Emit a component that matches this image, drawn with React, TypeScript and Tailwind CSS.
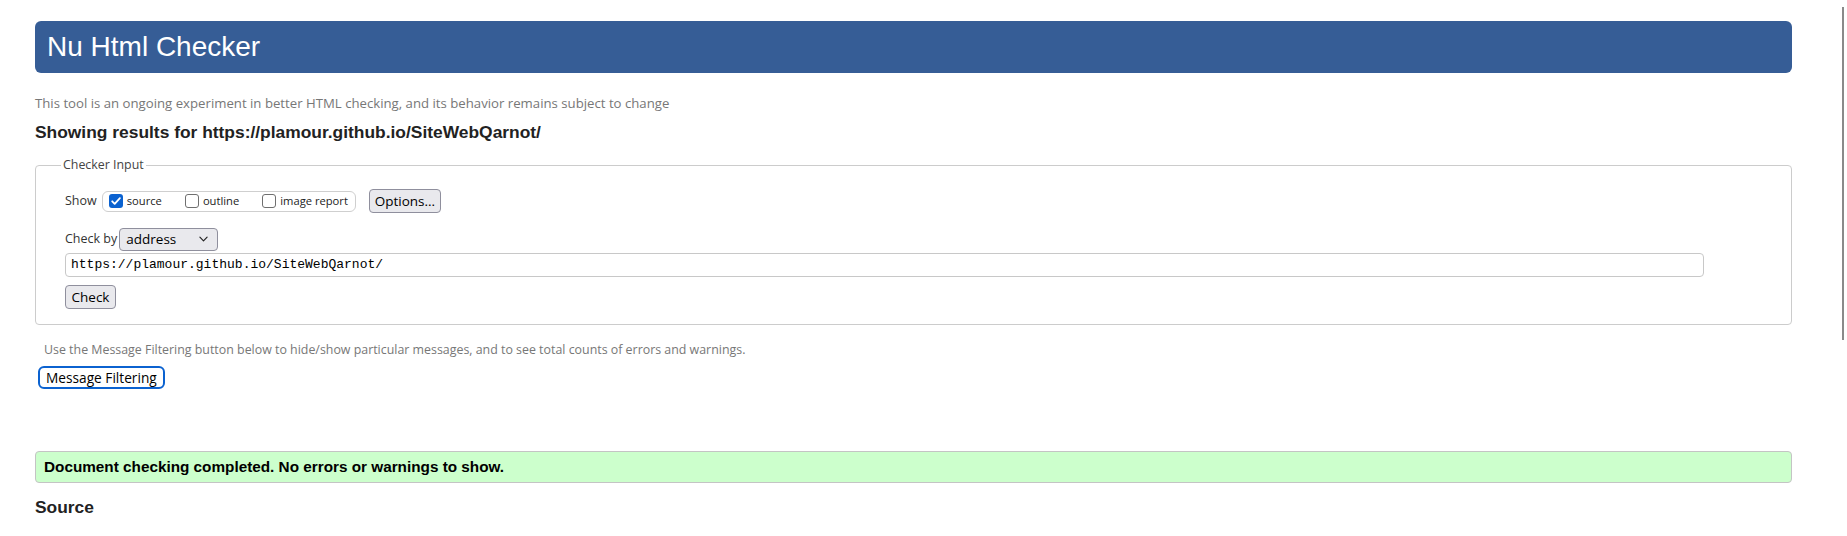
import React from "react";

function CheckBox({ checked }: { checked?: boolean }) {
  if (checked) {
    return (
      <span className="flex h-[14px] w-[14px] items-center justify-center rounded-[3px] bg-[#0b62d0]">
        <svg viewBox="0 0 14 14" className="h-[14px] w-[14px]">
          <path
            d="M3.2 7.3l2.5 2.5L10.9 4.2"
            fill="none"
            stroke="white"
            strokeWidth="1.8"
            strokeLinecap="round"
            strokeLinejoin="round"
          />
        </svg>
      </span>
    );
  }
  return <span className="h-[14px] w-[14px] rounded-[3px] border border-[#6f6f6f] bg-white" />;
}

function Option({ label, checked }: { label: string; checked?: boolean }) {
  return (
    <label className="flex items-center gap-[4px]">
      <CheckBox checked={checked} />
      <span className="text-[11.2px] leading-[16px] text-[#222]">{label}</span>
    </label>
  );
}

export default function App() {
  return (
    <div className="relative min-h-[536px] w-[1847px] overflow-hidden bg-white pl-[35px] pt-[21px] font-['Open_Sans',sans-serif]">
      <div className="w-[1757px]">
        {/* title bar */}
        <div className="flex h-[52px] items-center rounded-[6px] bg-[#365d96] pl-[12px]">
          <h1 className="font-['Liberation_Sans',Arial,sans-serif] text-[28px] leading-[32px] text-white">
            Nu Html Checker
          </h1>
        </div>

        <p className="mt-[22px] text-[13.2px] leading-[16px] text-[#777]">
          This tool is an ongoing experiment in better HTML checking, and its behavior remains subject to change
        </p>

        <h2 className="mt-[11px] font-['Liberation_Sans',Arial,sans-serif] text-[17.4px] font-bold leading-[20px] text-[#222]">
          Showing results for https://plamour.github.io/SiteWebQarnot/
        </h2>

        <fieldset className="mt-[15px] rounded-[4px] border border-[#cccccc] pb-[15px] pl-[29px]">
          <legend className="ml-[-4px] px-[2px] text-[12.4px] leading-[16px] text-[#444]">Checker Input</legend>

          <div className="mt-[16px] flex h-[24px] items-center">
            <span className="mr-[5px] text-[12.5px] leading-[16px] text-[#333]">Show</span>
            <div className="flex h-[21px] items-center gap-[23px] rounded-[6px] border border-[#cfcfcf] pl-[6px] pr-[7px]">
              <Option label="source" checked />
              <Option label="outline" />
              <Option label="image report" />
            </div>
            <button className="ml-[13px] h-[24px] w-[72px] rounded-[4px] border border-[#8f8f9d] bg-[#e9e9ed] text-[13.5px] leading-[18px] text-black">
              Options...
            </button>
          </div>

          <div className="mt-[14px] flex h-[24px] items-center">
            <span className="mr-[2px] text-[12.5px] leading-[16px] text-[#333]">Check by</span>
            <div className="flex h-[23px] w-[99px] items-center justify-between rounded-[4px] border border-[#8f8f9d] bg-[#e9e9ed] pl-[6px] pr-[9px]">
              <span className="text-[13.5px] leading-[18px] text-black">address</span>
              <svg viewBox="0 0 10 6" className="h-[6px] w-[9px]">
                <path d="M1 1l4 4 4-4" fill="none" stroke="#222" strokeWidth="1.3" strokeLinecap="round" strokeLinejoin="round" />
              </svg>
            </div>
          </div>

          <div className="mt-[2px] flex h-[24px] w-[1639px] items-center rounded-[4px] border border-[#c8c8c8] bg-white pl-[5px]">
            <span className="font-['Liberation_Mono','Courier_New',monospace] text-[13px] leading-[16px] text-black">
              https://plamour.github.io/SiteWebQarnot/
            </span>
          </div>

          <button className="mt-[8px] h-[24px] w-[51px] rounded-[4px] border border-[#8f8f9d] bg-[#e9e9ed] text-[13.5px] leading-[18px] text-black">
            Check
          </button>
        </fieldset>

        <p className="ml-[9px] mt-[17px] text-[12.4px] leading-[16px] text-[#777]">
          Use the Message Filtering button below to hide/show particular messages, and to see total counts of errors and warnings.
        </p>

        <button className="ml-[3px] mt-[8px] flex h-[23px] items-center rounded-[6px] border-2 border-[#0b62d0] bg-white px-[6px] text-[13.7px] leading-[18px] text-black">
          Message Filtering
        </button>

        <div className="mt-[62px] flex h-[32px] items-center rounded-[4px] border border-[#c4c4c4] bg-[#ccffcc] pl-[8px]">
          <span className="font-['Liberation_Sans',Arial,sans-serif] text-[15.3px] font-bold leading-[18px] text-black">
            Document checking completed. No errors or warnings to show.
          </span>
        </div>

        <h2 className="mt-[14px] font-['Liberation_Sans',Arial,sans-serif] text-[17.4px] font-bold leading-[20px] text-[#222]">
          Source
        </h2>
      </div>

      {/* page scrollbar thumb */}
      <div className="absolute left-[1842px] top-[7px] h-[333px] w-[2px] bg-[#8a8a8a]" />
    </div>
  );
}
